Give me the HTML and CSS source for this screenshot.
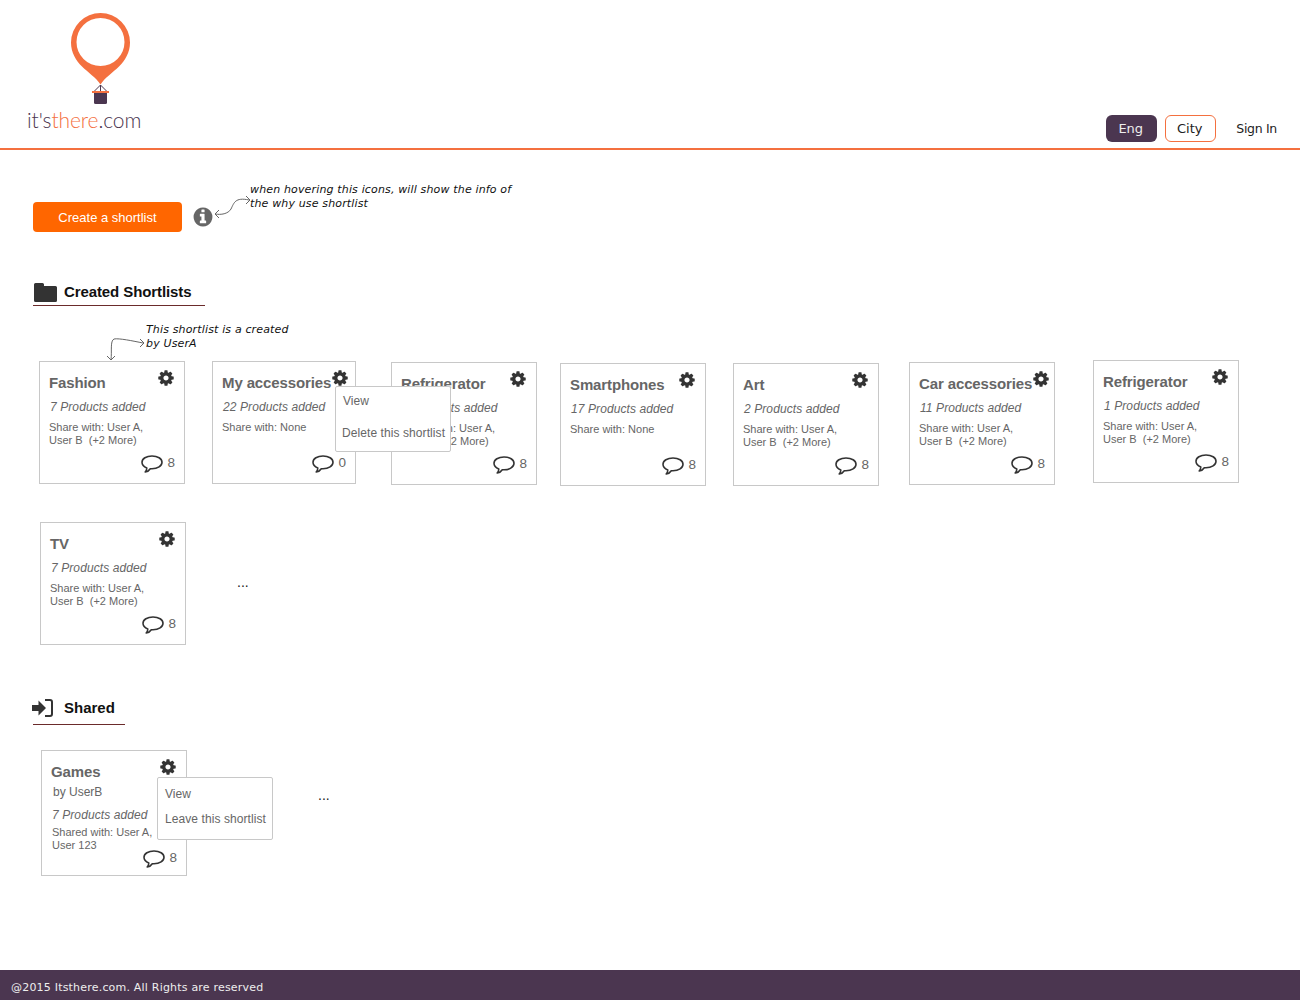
FILE: index.html
```html
<!DOCTYPE html>
<html lang="en">
<head>
<meta charset="UTF-8">
<meta name="viewport" content="width=device-width, initial-scale=1.0">
<title>Itsthere.com - Shortlists</title>
<link rel="stylesheet" href="styles.css">
</head>
<body>
<svg class="icon-defs" xmlns="http://www.w3.org/2000/svg">
<symbol id="cog" viewBox="0 0 1792 1792"><path d="M1152 896q0-106-75-181t-181-75-181 75-75 181 75 181 181 75 181-75 75-181zm512-109v222q0 12-8 23t-20 13l-185 28q-19 54-39 91 35 50 107 138 10 12 10 25t-9 23q-27 37-99 108t-94 71q-12 0-26-9l-138-108q-44 23-91 38-16 136-29 186-7 28-36 28h-222q-14 0-24.500-8.500t-11.500-21.500l-28-184q-49-16-90-37l-141 107q-10 9-25 9-14 0-25-11-126-114-165-168-7-10-7-23 0-12 8-23 15-21 51-66.500t54-70.500q-27-50-41-99l-183-27q-13-2-21-12.500t-8-23.500v-222q0-12 8-23t19-13l186-28q14-46 39-92-40-57-107-138-10-12-10-24 0-10 9-23 26-36 98.500-107.500t94.500-71.500q13 0 26 10l138 107q44-23 91-38 16-136 29-186 7-28 36-28h222q14 0 24.500 8.500t11.500 21.500l28 184q49 16 90 37l142-107q9-9 24-9 13 0 25 10 129 119 165 170 7 8 7 22 0 12-8 23-15 21-51 66.500t-54 70.500q26 50 41 98l183 28q13 2 21 12.500t8 23.500z"/></symbol>
<symbol id="comment" viewBox="0 0 22 19"><path d="M11 1C5.400 1 1 3.700 1 7.300c0 2.500 2 4.500 4.800 5.600 0 1.500-.6 3-1.600 4.100 2-.3 3.900-1.400 5.100-3.300.6.100 1.100.100 1.700.100 5.600 0 10-2.900 10-6.500S16.600 1 11 1z" fill="none" stroke="#333" stroke-width="1.600" stroke-linejoin="round"/></symbol>
</svg>

<header class="top-bar">
  <a class="logo">
    <svg class="logo-mark" width="60" height="92" viewBox="0 0 60 92" xmlns="http://www.w3.org/2000/svg">
      <path fill-rule="evenodd" d="M29.500 0a29.500 29.500 0 0 1 29.500 29.500c0 10-5 18-11 24-6 6-14 11-18.500 18-4.500-7-12.500-12-18.500-18-6-6-11-14-11-24A29.500 29.500 0 0 1 29.500 0zM5.500 29a24 24 0 1 0 48 0a24 24 0 1 0-48 0z" fill="#f4703f"/>
      <path d="M29.500 72l-6 6M29.500 72l6 6M29.500 72v6" stroke="#4b3650" stroke-width="1" fill="none"/>
      <rect x="21" y="78" width="17" height="2" fill="#f4703f"/>
      <path d="M23 80h13v9.500q0 1.500-1.500 1.500h-10Q23 91 23 89.500z" fill="#4b3650"/>
    </svg>
    <span class="logo-text">it's<span class="logo-accent">there</span>.com</span>
  </a>
  <nav class="top-nav">
    <button class="pill pill-dark">Eng</button>
    <button class="pill pill-line">City</button>
    <a class="sign-in">Sign In</a>
  </nav>
</header>

<main class="page">
  <div class="action-row">
    <button class="create-btn">Create a shortlist</button>
    <svg class="info-icon" width="22" height="22" viewBox="0 0 1792 1792" xmlns="http://www.w3.org/2000/svg"><path d="M1152 1376v-160q0-14-9-23t-23-9h-96v-512q0-14-9-23t-23-9h-320q-14 0-23 9t-9 23v160q0 14 9 23t23 9h96v320h-96q-14 0-23 9t-9 23v160q0 14 9 23t23 9h448q14 0 23-9t9-23zm-128-896v-160q0-14-9-23t-23-9h-192q-14 0-23 9t-9 23v160q0 14 9 23t23 9h192q14 0 23-9t9-23zm640 416q0 209-103 385.500t-279.500 279.500-385.500 103-385.500-103-279.500-279.500-103-385.500 103-385.500 279.500-279.500 385.500-103 385.500 103 279.500 279.500 103 385.500z" fill="#666"/></svg>
    <svg class="arrow arrow-info" width="38" height="26" viewBox="0 0 38 26" xmlns="http://www.w3.org/2000/svg"><path d="M36 5C22 2 21 8 18 14 15 19 8 20 2 19M33 1l4 4-4 4M6 15l-4 4 4 4" fill="none" stroke="#666" stroke-width="1"/></svg>
    <p class="note note-info">when hovering this icons, will show the info of<br>the why use shortlist</p>
  </div>

  <h2 class="section-head head-created">
    <svg width="23" height="19" viewBox="0 0 23 19" xmlns="http://www.w3.org/2000/svg"><path d="M1.500 0h7q1.500 0 1.500 1.500V3h11.500Q23 3 23 4.500v13q0 1.500-1.500 1.500h-20Q0 19 0 17.500v-16Q0 0 1.500 0z" fill="#333"/></svg>
    <span>Created Shortlists</span>
  </h2>

  <div class="card-row row-one">
    <p class="note note-owner">This shortlist is a created<br>by UserA</p>
    <svg class="arrow arrow-owner" width="42" height="26" viewBox="0 0 42 26" xmlns="http://www.w3.org/2000/svg"><path d="M38 7C28 5 14 2 9 3 5 5 7 15 6 24M35 3l4 4-4 4M2 20l4 4 4-4" fill="none" stroke="#666" stroke-width="1"/></svg>

    <article class="card c-fashion">
      <div class="card-top"><h3>Fashion</h3><svg class="cog"><use href="#cog"/></svg></div>
      <p class="products">7 Products added</p>
      <p class="shared">Share with: User A,<br>User B&nbsp; (+2 More)</p>
      <div class="card-foot"><svg class="bubble"><use href="#comment"/></svg><span>8</span></div>
    </article>

    <article class="card c-access">
      <div class="card-top"><h3>My accessories</h3><svg class="cog"><use href="#cog"/></svg></div>
      <p class="products">22 Products added</p>
      <p class="shared">Share with: None</p>
      <div class="card-foot"><svg class="bubble"><use href="#comment"/></svg><span>0</span></div>
      <ul class="menu menu-delete">
        <li class="menu-view">View</li>
        <li>Delete this shortlist</li>
      </ul>
    </article>

    <article class="card c-fridge">
      <div class="card-top"><h3>Refrigerator</h3><svg class="cog"><use href="#cog"/></svg></div>
      <p class="products">8 Products added</p>
      <p class="shared">Share with: User A,<br>User B&nbsp; (+2 More)</p>
      <div class="card-foot"><svg class="bubble"><use href="#comment"/></svg><span>8</span></div>
    </article>

    <article class="card c-phones">
      <div class="card-top"><h3>Smartphones</h3><svg class="cog"><use href="#cog"/></svg></div>
      <p class="products">17 Products added</p>
      <p class="shared">Share with: None</p>
      <div class="card-foot"><svg class="bubble"><use href="#comment"/></svg><span>8</span></div>
    </article>

    <article class="card c-art">
      <div class="card-top"><h3>Art</h3><svg class="cog"><use href="#cog"/></svg></div>
      <p class="products">2 Products added</p>
      <p class="shared">Share with: User A,<br>User B&nbsp; (+2 More)</p>
      <div class="card-foot"><svg class="bubble"><use href="#comment"/></svg><span>8</span></div>
    </article>

    <article class="card c-car">
      <div class="card-top"><h3>Car accessories</h3><svg class="cog"><use href="#cog"/></svg></div>
      <p class="products">11 Products added</p>
      <p class="shared">Share with: User A,<br>User B&nbsp; (+2 More)</p>
      <div class="card-foot"><svg class="bubble"><use href="#comment"/></svg><span>8</span></div>
    </article>

    <article class="card c-fridge2">
      <div class="card-top"><h3>Refrigerator</h3><svg class="cog"><use href="#cog"/></svg></div>
      <p class="products">1 Products added</p>
      <p class="shared">Share with: User A,<br>User B&nbsp; (+2 More)</p>
      <div class="card-foot"><svg class="bubble"><use href="#comment"/></svg><span>8</span></div>
    </article>
  </div>

  <div class="card-row row-two">
    <article class="card c-tv">
      <div class="card-top"><h3>TV</h3><svg class="cog"><use href="#cog"/></svg></div>
      <p class="products">7 Products added</p>
      <p class="shared">Share with: User A,<br>User B&nbsp; (+2 More)</p>
      <div class="card-foot"><svg class="bubble"><use href="#comment"/></svg><span>8</span></div>
    </article>
    <span class="more more-created">...</span>
  </div>

  <h2 class="section-head head-shared">
    <svg width="21" height="18" viewBox="0 0 21 18" xmlns="http://www.w3.org/2000/svg"><path d="M0 6h6.500V1.500L14 9l-7.500 7.500V12H0z" fill="#333"/><path d="M13 1h5q2 0 2 2v12q0 2-2 2h-5" fill="none" stroke="#333" stroke-width="2"/></svg>
    <span>Shared</span>
  </h2>

  <div class="card-row row-three">
    <article class="card c-games">
      <div class="card-top"><h3>Games</h3><svg class="cog"><use href="#cog"/></svg></div>
      <p class="owner">by UserB</p>
      <p class="products">7 Products added</p>
      <p class="shared">Shared with: User A,<br>User 123</p>
      <div class="card-foot"><svg class="bubble"><use href="#comment"/></svg><span>8</span></div>
      <ul class="menu menu-leave">
        <li class="menu-view">View</li>
        <li>Leave this shortlist</li>
      </ul>
    </article>
    <span class="more more-shared">...</span>
  </div>
</main>

<footer class="site-foot">@2015 Itsthere.com. All Rights are reserved</footer>
</body>
</html>
```

FILE: styles.css
```css
html, body {
margin: 0;
padding: 0;
}
body {
font-family: 'DejaVu Sans', sans-serif;
background-color: #fff;
min-height: 1000px;
display: flex;
flex-direction: column;
}
.icon-defs {
display: none;
}
.top-bar {
height: 148px;
flex: none;
border-bottom: 2px solid #f4703f;
display: flex;
justify-content: space-between;
align-items: flex-end;
}
.logo {
display: flex;
flex-direction: column;
margin-left: 27px;
margin-bottom: 17px;
}
.logo-mark {
margin-left: 44px;
}
.logo-text {
font-family: 'Lato', sans-serif;
font-weight: 300;
font-size: 21px;
line-height: 22px;
margin-top: 4px;
color: #4b3650;
letter-spacing: -0.1px;
}
.logo-accent {
color: #f4703f;
}
.top-nav {
display: flex;
align-items: center;
margin-right: 23px;
margin-bottom: 6px;
}
.pill {
font-family: 'DejaVu Sans', sans-serif;
font-size: 13px;
width: 51px;
height: 27px;
padding: 0 2px 0 0;
border-radius: 6px;
margin-right: 8px;
}
.pill-dark {
background-color: #4b3650;
border: none;
color: #eee;
}
.pill-line {
background-color: #fff;
border: 1px solid #f4703f;
color: #222;
}
.sign-in {
font-size: 12.5px;
letter-spacing: -0.3px;
color: #222;
margin-left: 12px;
}
.page {
flex: 1;
}
.action-row {
position: relative;
display: flex;
align-items: center;
margin: 52px 0 0 33px;
height: 30px;
}
.create-btn {
width: 149px;
height: 30px;
background-color: #ff6600;
color: #fff;
border: none;
border-radius: 4px;
font-family: 'Liberation Sans', sans-serif;
font-size: 13px;
padding: 0;
}
.info-icon {
margin-left: 10px;
}
.note {
position: absolute;
margin: 0;
font-style: italic;
font-size: 11px;
line-height: 14px;
letter-spacing: 0.15px;
color: #111;
white-space: nowrap;
}
.arrow {
position: absolute;
}
.note-info {
left: 217px;
top: -19px;
}
.arrow-info {
left: 180px;
top: -7px;
}
.section-head {
display: flex;
align-items: center;
font-family: 'Liberation Sans', sans-serif;
font-size: 15px;
font-weight: bold;
color: #111;
margin: 0 0 0 33px;
border-bottom: 1px solid #6b2b2b;
}
.section-head svg {
flex: none;
}
.head-created {
margin-top: 51px;
width: 172px;
height: 22px;
align-items: flex-start;
letter-spacing: -0.1px;
}
.head-created svg {
margin-left: 1px;
}
.head-created span {
margin-left: 7px;
}
.head-shared {
margin-top: 54px;
width: 92px;
height: 25px;
align-items: flex-start;
}
.head-shared svg {
margin-left: -1px;
}
.head-shared span {
margin-left: 11px;
}
.card-row {
position: relative;
display: flex;
align-items: flex-start;
}
.row-one {
margin-top: 55px;
height: 161px;
}
.row-three {
margin-top: 25px;
}
.card {
position: relative;
box-sizing: border-box;
width: 146px;
height: 123px;
border: 1px solid #c8c8c8;
background-color: #fff;
padding: 0 8px 0 9px;
display: flex;
flex-direction: column;
font-family: 'Liberation Sans', sans-serif;
color: #666;
flex: none;
}
.card-top {
display: flex;
justify-content: space-between;
padding-top: 12px;
height: 17px;
}
.card h3 {
margin: 0;
font-size: 15px;
line-height: 17px;
letter-spacing: -0.12px;
color: #666;
white-space: nowrap;
}
.cog {
width: 18px;
height: 18px;
fill: #333;
flex: none;
margin: -5px 1px 0 0;
}
.products {
margin: 9px 0 0 1px;
font-size: 12px;
line-height: 14px;
font-style: italic;
letter-spacing: 0.09px;
white-space: nowrap;
}
.shared {
margin: 7px 0 0 0;
font-size: 11px;
line-height: 13px;
white-space: nowrap;
}
.owner {
margin: 5px 0 0 2px;
font-size: 12px;
line-height: 14px;
}
.card-foot {
margin: auto 1px 9px 0;
display: flex;
justify-content: flex-end;
align-items: flex-start;
font-size: 13.5px;
line-height: 15px;
}
.bubble {
width: 22px;
height: 19px;
margin-right: 4px;
}
.menu {
position: absolute;
z-index: 2;
list-style: none;
margin: 0;
padding: 0;
box-sizing: border-box;
width: 116px;
background-color: #fff;
border: 1px solid #c8c8c8;
border-radius: 2px;
font-size: 12px;
line-height: 14px;
letter-spacing: 0.08px;
color: #666;
white-space: nowrap;
}
.menu-delete {
left: 122px;
top: 24px;
height: 66px;
padding: 7px 0 0 6px;
}
.menu-delete .menu-view {
margin: 0 0 18px 1px;
}
.menu-leave {
left: 115px;
top: 26px;
height: 63px;
padding: 9px 0 0 7px;
}
.menu-leave .menu-view {
margin-bottom: 11px;
}
.more {
font-family: 'Liberation Sans', sans-serif;
font-size: 14px;
color: #222;
}
.note-owner {
left: 146px;
top: -38px;
}
.arrow-owner {
left: 105px;
top: -25px;
}
.c-fashion { margin: 0 0 0 39px; }
.c-access { margin: 0 0 0 27px; width: 144px; }
.c-fridge { margin: 1px 0 0 35px; }
.c-phones { margin: 2px 0 0 23px; }
.c-art { margin: 2px 0 0 27px; }
.c-car { margin: 1px 0 0 30px; }
.c-fridge2 { margin: -1px 0 0 38px; }
.c-tv { margin-left: 40px; }
.c-games { margin-left: 41px; height: 126px; }
.c-games .products { margin-top: 9px; }
.c-games .shared { margin: 4px 0 0 1px; }
.c-games .card-foot { margin-top: -2px; margin-bottom: 8px; }
.more-created { margin: 52px 0 0 51px; }
.more-shared { margin: 37px 0 0 131px; }
.site-foot {
height: 30px;
flex: none;
box-sizing: border-box;
background-color: #4b3650;
color: #eee;
font-size: 11px;
letter-spacing: 0.2px;
padding: 11px 0 0 11px;
line-height: 14px;
}
```
